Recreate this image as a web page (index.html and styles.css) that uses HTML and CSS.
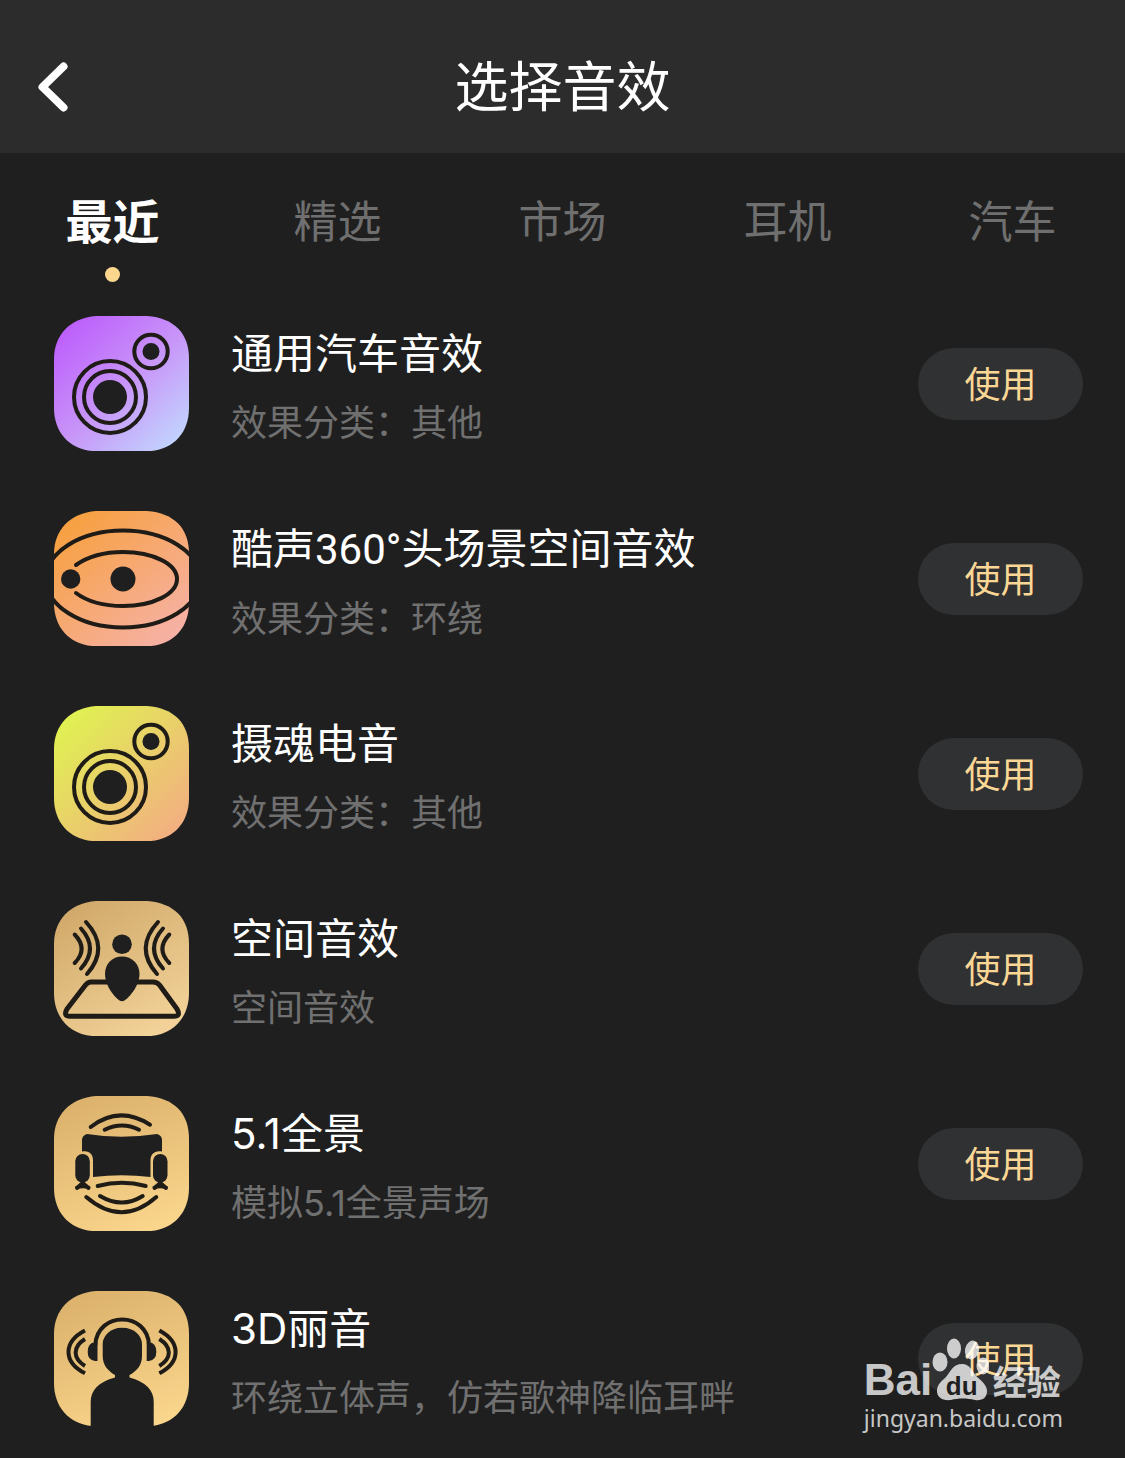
FILE: index.html
```html
<!DOCTYPE html>
<html lang="zh-CN">
<head>
<meta charset="utf-8">
<meta name="viewport" content="width=device-width, initial-scale=1">
<title>选择音效</title>
<link rel="stylesheet" href="styles.css">
</head>
<body>
<svg class="defs" width="0" height="0" aria-hidden="true">
  <defs>
    <linearGradient id="violet" x1="0.1" y1="0.1" x2="0.9" y2="0.95"><stop offset="0" stop-color="#bd60fc"/><stop offset="0.5" stop-color="#c894f8"/><stop offset="1" stop-color="#c2d4fe"/></linearGradient>
    <linearGradient id="orange" x1="0.15" y1="0.1" x2="0.85" y2="0.95"><stop offset="0" stop-color="#f7a144"/><stop offset="1" stop-color="#f6b1a4"/></linearGradient>
    <linearGradient id="lime" x1="0.1" y1="0.1" x2="0.9" y2="0.9"><stop offset="0" stop-color="#e0f052"/><stop offset="1" stop-color="#f2b080"/></linearGradient>
    <linearGradient id="sand" x1="0.1" y1="0" x2="0.7" y2="1"><stop offset="0" stop-color="#cfa768"/><stop offset="1" stop-color="#f2d298"/></linearGradient>
    <linearGradient id="gold" x1="0.3" y1="0" x2="0.7" y2="1"><stop offset="0" stop-color="#dcb26c"/><stop offset="1" stop-color="#fad58c"/></linearGradient>
    <path id="tile" d="M42 0H93C120 2 135 17 135 43V92C135 116 120 133 97 135H38C15 133 0 116 0 92V43C0 19 16 2 42 0Z"/>
    <clipPath id="tile-clip"><use href="#tile"/></clipPath>
    <g id="speaker">
      <g class="line"><circle cx="56" cy="81" r="36"/><circle cx="56" cy="81" r="26"/><circle cx="97" cy="35.500" r="16.700"/></g>
      <circle class="solid" cx="56" cy="81" r="17"/><circle class="solid" cx="97" cy="35.500" r="8.500"/>
    </g>
  </defs>
</svg>

<header class="topbar">
  <button class="back" type="button" aria-label="返回">
    <svg width="30" height="50" viewBox="0 0 30 50"><path d="M25.500 4.500L4.500 25L25.500 45.500"/></svg>
  </button>
  <h1 class="heading">选择音效</h1>
</header>

<nav class="tabs">
  <a class="tab tab-active" href="#recent">最近</a>
  <a class="tab" href="#featured">精选</a>
  <a class="tab" href="#market">市场</a>
  <a class="tab" href="#earphone">耳机</a>
  <a class="tab" href="#car">汽车</a>
</nav>

<main>
<ul class="effects">
  <li class="effect">
    <svg class="icon" viewBox="0 0 135 135" aria-hidden="true"><use href="#tile" fill="url(#violet)"/><use href="#speaker"/></svg>
    <div class="info"><h2 class="name">通用汽车音效</h2><p class="note">效果分类：其他</p></div>
    <button class="use" type="button">使用</button>
  </li>
  <li class="effect">
    <svg class="icon" viewBox="0 0 135 135" aria-hidden="true"><use href="#tile" fill="url(#orange)"/>
      <g class="line" clip-path="url(#tile-clip)"><ellipse cx="69" cy="68" rx="77" ry="48.500"/><path d="M22 54C34 45.500 50 41 69 41C99 41 123 53 123 68S99 95 69 95C50 95 34 91 22 82"/></g>
      <circle class="solid" cx="16.700" cy="68" r="9.700"/><circle class="solid" cx="69" cy="68" r="12.500"/>
    </svg>
    <div class="info"><h2 class="name">酷声<span class="angle">360°</span>头场景空间音效</h2><p class="note">效果分类：环绕</p></div>
    <button class="use" type="button">使用</button>
  </li>
  <li class="effect">
    <svg class="icon" viewBox="0 0 135 135" aria-hidden="true"><use href="#tile" fill="url(#lime)"/><use href="#speaker"/></svg>
    <div class="info"><h2 class="name">摄魂电音</h2><p class="note">效果分类：其他</p></div>
    <button class="use" type="button">使用</button>
  </li>
  <li class="effect">
    <svg class="icon" viewBox="0 0 135 135" aria-hidden="true"><use href="#tile" fill="url(#sand)"/>
      <path class="line thick" d="M54 81H37Q34 81 31.500 84L13 108Q9 115.300 16 115.300H120Q127 115.300 123 108L105.500 84Q103 81 99 81H83"/>
      <g class="line"><path d="M32 21Q56 47 33 73M27 27.500Q45 47.500 27 67.500M20.700 33.500Q34.500 48 20.700 62M104 21Q80 47 103 73M109 27.500Q91 47.500 109 67.500M115.300 33.500Q101.500 48 115.300 62"/></g>
      <circle class="solid" cx="68" cy="43.300" r="9.800"/>
      <path class="solid" d="M68 55.500C78 55.500 85.500 63 85.500 73C85.500 83 78 94 70.500 99.500Q68 101 65.500 99.500C58 94 51 83 51 73C51 63 58 55.500 68 55.500Z"/>
    </svg>
    <div class="info"><h2 class="name">空间音效</h2><p class="note">空间音效</p></div>
    <button class="use" type="button">使用</button>
  </li>
  <li class="effect">
    <svg class="icon" viewBox="0 0 135 135" aria-hidden="true"><use href="#tile" fill="url(#gold)"/>
      <g class="line"><path d="M36.700 31Q65 9 96 28.700M50.700 33.700Q68 25.500 85 33.700M43.700 90Q68 83.500 91.700 90M46 100Q68 113 88.700 100M32.300 101Q67.700 131.500 102.300 101"/></g>
      <path class="solid" d="M33 38Q67 43.500 103 38Q108 39.500 108 44V55.500C101 54 96.500 58 96.500 64V81Q67.700 77.500 39 81V64C39 58 35 54 28 55.500V44Q28 39.500 33 38Z"/>
      <rect class="solid" x="21.300" y="58" width="14.500" height="28.500" rx="7.250"/><rect class="solid" x="99" y="58" width="14.500" height="28.500" rx="7.250"/>
      <path class="line" d="M23 92L28.700 87L34.500 92M23 91.500Q29 89 34.500 91.500M100.500 92L106.300 87L112 92M100.500 91.500Q106 89 112 91.500"/>
    </svg>
    <div class="info"><h2 class="name">5.1全景</h2><p class="note">模拟5.1全景声场</p></div>
    <button class="use" type="button">使用</button>
  </li>
  <li class="effect">
    <svg class="icon" viewBox="0 0 135 135" aria-hidden="true"><use href="#tile" fill="url(#gold)"/>
      <path class="solid" d="M68 36.700C81 36.700 88 45 88 53V65C88 74 83 80 75.500 84V86.500Q99.700 93 99.700 111V135.500H36.700V111Q36.700 93 61 86.500V84C54 80 48.700 74 48.700 65V53C48.700 45 56 36.700 68 36.700Z"/>
      <path class="line" d="M41.300 54C43 20 93.500 20 95 54"/>
      <path class="solid" d="M43.500 51.500V70H41Q33.700 69 33.700 61Q33.700 51.500 41 51.500ZM92.700 51.500V70H95Q102.300 69 102.300 61Q102.300 51.500 95 51.500Z"/>
      <path class="line flat" d="M31 39.500C9 51 9 71 31 82.300M31 48C18.500 56 18.500 67 31 75M105.300 39.500C127 51 127 71 105.300 82.300M105.300 48C118 56 118 67 105.300 75"/>
    </svg>
    <div class="info"><h2 class="name">3D丽音</h2><p class="note">环绕立体声，仿若歌神降临耳畔</p></div>
    <button class="use" type="button">使用</button>
  </li>
</ul>
</main>

<aside class="watermark">
  <div class="brand">
    <span class="bai">Bai</span>
    <span class="paw">
      <svg width="58" height="64" viewBox="0 0 58 64" aria-hidden="true">
        <ellipse cx="9" cy="24" rx="7.500" ry="9.500"/><ellipse cx="23" cy="10.500" rx="7" ry="10"/><ellipse cx="41" cy="12" rx="7" ry="9.500" transform="rotate(12 41 12)"/><ellipse cx="52" cy="28" rx="6.500" ry="8.500"/>
        <path d="M31 26C39 26 41 33 46 39C52 44 56 48 56 53C56 60 51 63 44 62C36 60 27 60 20 62C11 63 6 59 6 53C6 46 11 43 15 39C20 33 22 26 31 26Z"/>
      </svg>
      <span class="du">du</span>
    </span>
    <span class="jingyan">经验</span>
  </div>
  <div class="site">jingyan.baidu.com</div>
</aside>
</body>
</html>
```
FILE: styles.css
```css
* { box-sizing: border-box; }

body {
  position: relative;
  margin: 0;
  background: #1f1f1f;
  color: #fff;
  font-family: Inter, "Noto Sans CJK SC", sans-serif;
}

h1, h2, p, ul { margin: 0; padding: 0; font-weight: 400; }
ul { list-style: none; }
button { border: 0; padding: 0; font: inherit; cursor: pointer; }
svg { display: block; flex: none; }
.defs { position: absolute; }

.topbar {
  display: grid;
  grid-template-columns: 1fr auto 1fr;
  align-items: center;
  height: 153px;
  padding: 20px 38px 0;
  background: #2c2c2c;
}
.back { justify-self: start; background: none; }
.back path {
  fill: none;
  stroke: #fff;
  stroke-width: 8;
  stroke-linecap: round;
  stroke-linejoin: round;
}
.heading { padding-top: 2px; font-size: 54px; line-height: 72px; }

.tabs {
  display: grid;
  grid-template-columns: repeat(5, 1fr);
  height: 133px;
  padding-top: 37px;
}
.tab {
  display: flex;
  flex-direction: column;
  align-items: center;
  gap: 13px;
  color: #6f6f6f;
  font-size: 44px;
  line-height: 64px;
  text-decoration: none;
}
.tab-active { color: #fff; font-size: 47px; font-weight: 600; }
.tab-active::after {
  content: "";
  width: 15px;
  height: 15px;
  border-radius: 50%;
  background: #fbd68d;
}

.effect {
  display: flex;
  align-items: center;
  gap: 42px;
  height: 195px;
  padding: 0 42px 0 54px;
}
.icon { width: 135px; height: 135px; }
.line {
  fill: none;
  stroke: #1f1b17;
  stroke-width: 4;
  stroke-linecap: round;
  stroke-linejoin: round;
}
.thick { stroke-width: 5; }
.flat { stroke-linecap: butt; }
.solid { fill: #1f1f1f; }
.info { flex: 1; padding-top: 13px; }
.name { font-size: 42px; line-height: 66px; }
.angle { font-family: Roboto, sans-serif; }
.note { color: #707070; font-size: 36px; line-height: 72px; }
.use {
  width: 165px;
  height: 72px;
  padding-top: 2px;
  border-radius: 36px;
  background: #303132;
  color: #fbd795;
  font-size: 36px;
  line-height: 70px;
}

.watermark {
  position: absolute;
  top: 1338px;
  right: 62px;
  color: rgba(255, 255, 255, 0.76);
  pointer-events: none;
}
.brand { display: flex; align-items: flex-end; height: 64px; }
.bai { width: 67px; font: 700 44px/44px "Liberation Sans", sans-serif; }
.paw { position: relative; width: 62px; }
.paw svg { fill: currentColor; }
.du {
  position: absolute;
  left: 15px;
  bottom: 2px;
  color: #1f1f1f;
  font: 700 26px/28px "Liberation Sans", sans-serif;
}
.jingyan { font-size: 34px; font-weight: 700; line-height: 38px; }
.site { font: 23px/32px "Noto Sans", sans-serif; }
```
